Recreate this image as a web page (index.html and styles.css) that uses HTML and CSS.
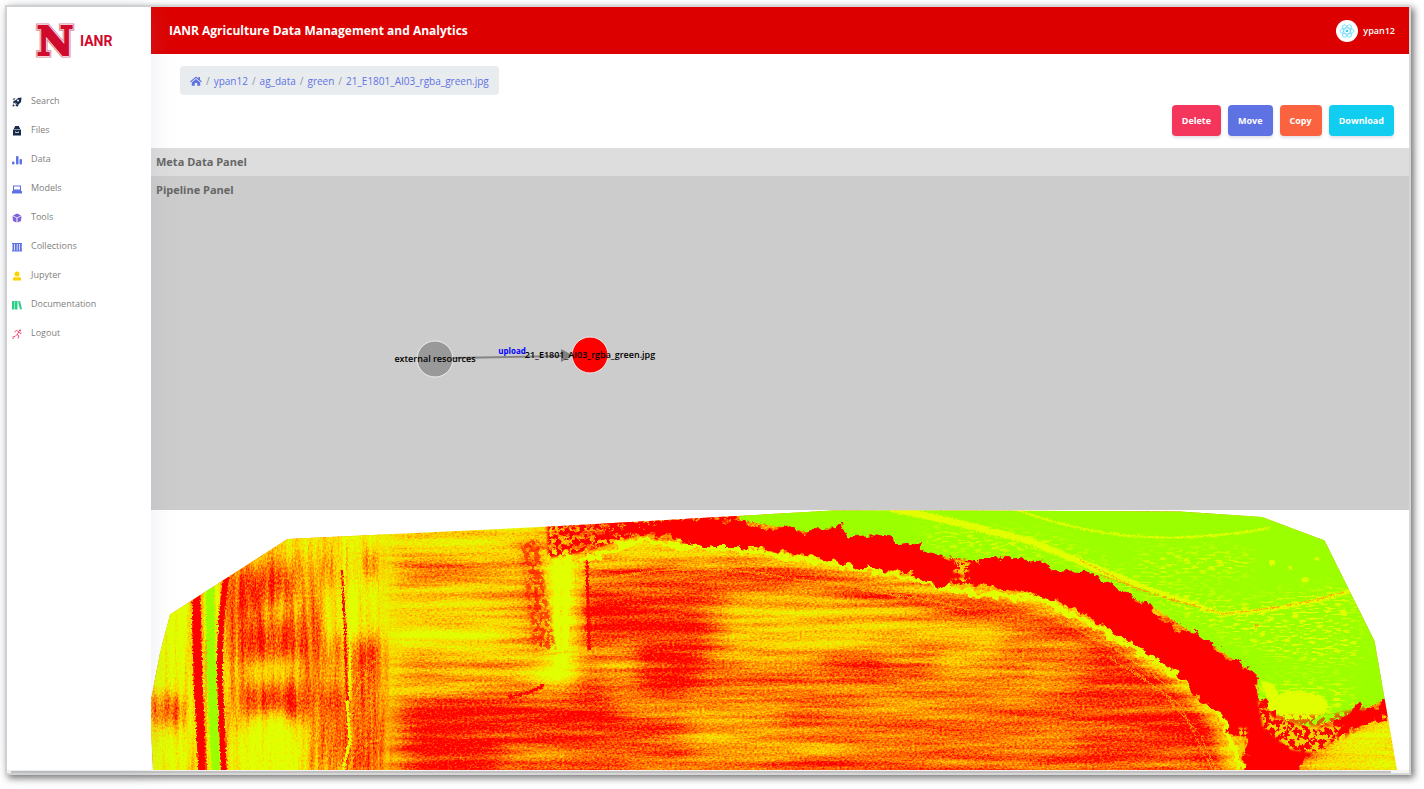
FILE: index.html
```
<!DOCTYPE html>
<html lang="en">
<head>
<meta charset="utf-8">
<title>IANR Agriculture Data Management and Analytics</title>
<meta name="viewport" content="width=device-width, initial-scale=1">
<link rel="stylesheet" href="styles.css">
</head>
<body>
<div class="window">
  <div class="layout">
    <aside class="sidebar">
      <a class="brand" href="#" aria-label="IANR home">
        <svg class="brand-mark" viewBox="0 0 50 60" aria-hidden="true">
          <text class="mark-outer" x="25" y="44" text-anchor="middle">N</text>
          <text class="mark-gap" x="25" y="44" text-anchor="middle">N</text>
          <text class="mark-inner" x="25" y="44" text-anchor="middle">N</text>
        </svg>
        <span class="brand-name">IANR</span>
      </a>
      <nav>
        <ul class="nav">
          <li><a href="#"><svg viewBox="0 0 20 20" class="navy"><path d="M19 1l-1 9-5 5-1 4-5-1 1-3-3-3-3 1 1-5 5-2 4-4z"/><path d="M2 14l4 4-5 1zM1 4l6-2-3 4z"/><circle cx="12" cy="7" r="2" fill="#fff"/><path d="M6 11l4 4" stroke="#fff" stroke-width="1.5"/></svg>Search</a></li>
          <li><a href="#"><svg viewBox="0 0 20 20" class="navy"><path d="M6 0h8v3H6zM4 3h12v3H4zM2 7h16v12H2z"/><path d="M7 11v2h6v-2" fill="none" stroke="#fff" stroke-width="1.5"/></svg>Files</a></li>
          <li><a href="#"><svg viewBox="0 0 20 20" class="indigo"><rect x="0" y="13" width="5" height="6" rx="2"/><rect x="8" y="2" width="5" height="17" rx="2"/><rect x="15" y="8" width="5" height="11" rx="2"/></svg>Data</a></li>
          <li><a href="#"><svg viewBox="0 0 20 20" class="indigo"><path d="M2 3h16v11H2zM0 14h20v5H0z"/><path d="M4 5h12v6H4z" fill="#fff"/></svg>Models</a></li>
          <li><a href="#"><svg viewBox="0 0 20 20" class="purple"><path d="M10 1l8 4-8 4-8-4z"/><path d="M1 6l8 4v9l-7-3zM19 6l-8 4v9l7-3z"/></svg>Tools</a></li>
          <li><a href="#"><svg viewBox="0 0 20 20" class="indigo"><path d="M0 2h20v2H0zM0 17h20v2H0zM1 3h3.500v15H1zM6 3h3.500v15H6zM11 3h3.500v15H11zM16 3h3.500v15H16z"/></svg>Collections</a></li>
          <li><a href="#"><svg viewBox="0 0 20 20" class="yellow"><circle cx="10" cy="6" r="5"/><path d="M2 19v-4q0-3 4-3 4 2 8 0 4 0 4 3v4z"/></svg>Jupyter</a></li>
          <li><a href="#"><svg viewBox="0 0 20 20" class="green"><path d="M0 2h5v17H0zM6 2h5v17H6zM12 3l4-1 4 16-4 1z"/></svg>Documentation</a></li>
          <li><a href="#"><svg viewBox="0 0 20 20" class="red"><circle cx="16" cy="3" r="2"/><path d="M5 6l4-3 5 3-4 5 4 3-2 5M10 11l-4 4-5 1M14 6l2 3 3-1M1 19l3-1" fill="none" stroke="currentColor" stroke-width="1.8"/></svg>Logout</a></li>
        </ul>
      </nav>
    </aside>
    <main class="main">
      <header class="topbar">
        <h1>IANR Agriculture Data Management and Analytics</h1>
        <a class="user" href="#">
          <svg class="avatar" viewBox="0 0 22 22" aria-hidden="true"><circle cx="11" cy="11" r="11" fill="#fff"/><g fill="none" stroke="#61dafb" stroke-width=".8"><ellipse cx="11" cy="11" rx="7" ry="3"/><ellipse cx="11" cy="11" rx="7" ry="3" transform="rotate(60 11 11)"/><ellipse cx="11" cy="11" rx="7" ry="3" transform="rotate(120 11 11)"/></g><circle cx="11" cy="11" r="1.3" fill="#3fc6ee"/></svg>
          ypan12
        </a>
      </header>
      <section class="toolbar">
        <nav aria-label="Breadcrumb">
          <ol class="crumbs">
            <li><a href="#" aria-label="Home"><svg class="home" viewBox="0 0 24 20"><path d="M12 1L0 11l1.500 1.600L12 4l10.500 8.600L24 11l-4-3.400V2h-3v3z"/><path d="M12 6l-8.500 7v6.500h6V14h5v5.500h6V13z"/></svg></a></li>
            <li><a href="#">ypan12</a></li>
            <li><a href="#">ag_data</a></li>
            <li><a href="#">green</a></li>
            <li><a href="#">21_E1801_AI03_rgba_green.jpg</a></li>
          </ol>
        </nav>
        <div class="actions">
          <button class="btn danger" type="button">Delete</button>
          <button class="btn primary" type="button">Move</button>
          <button class="btn warning" type="button">Copy</button>
          <button class="btn info" type="button">Download</button>
        </div>
      </section>
      <section class="panel meta"><h2>Meta Data Panel</h2></section>
      <section class="panel pipeline">
        <h2>Pipeline Panel</h2>
        <svg class="graph" role="img" aria-label="Pipeline graph">
          <path d="M302 154L411 152" stroke="#858585" stroke-width="2"/>
          <path d="M410 145L422 151.500 410 158z" fill="#808080"/>
          <circle cx="284" cy="155" r="18" fill="#999"/>
          <circle cx="439" cy="151" r="18" fill="#f00"/>
          <text x="284" y="158" class="node-label">external resources</text>
          <text x="439" y="154" class="node-label">21_E1801_AI03_rgba_green.jpg</text>
          <text x="361" y="150" class="edge-label">upload</text>
        </svg>
      </section>
      <svg class="aerial" viewBox="151 510 1258 260" role="img" aria-label="21_E1801_AI03_rgba_green.jpg">
        <defs>
          <clipPath id="edge"><path d="M150 705L160 653 170 614.500 287.500 539 560 526 833 510.500 950 510.500 1180 511.500 1262 517 1324.500 540.500 1374.500 641 1397 770H153z"/></clipPath>
          <linearGradient id="fade" gradientUnits="userSpaceOnUse" x1="376" x2="404" y1="0" y2="0"><stop offset="0" stop-color="#fff"/><stop offset="1" stop-color="#000"/></linearGradient>
          <mask id="west" maskUnits="userSpaceOnUse" x="150" y="510" width="300" height="260"><path fill="url(#fade)" d="M150 510H450V770H150z"/></mask>
          <filter id="rows" filterUnits="userSpaceOnUse" x="150" y="510" width="1259" height="260" color-interpolation-filters="sRGB">
            <feGaussianBlur in="SourceGraphic" stdDeviation="9" result="s"/>
            <feTurbulence type="fractalNoise" baseFrequency="0.008 0.13" numOctaves="4" seed="4"/>
            <feColorMatrix values="1 0 0 0 0 1 0 0 0 0 1 0 0 0 0 0 0 0 0 1" result="n1"/>
            <feTurbulence type="fractalNoise" baseFrequency="0.4 0.6" numOctaves="2" seed="9"/>
            <feColorMatrix values="1 0 0 0 0 1 0 0 0 0 1 0 0 0 0 0 0 0 0 1" result="n2"/>
            <feComposite in="s" in2="n1" operator="arithmetic" k2="1" k3="0.64" k4="-0.32" result="a"/>
            <feComposite in="a" in2="n2" operator="arithmetic" k2="1" k3="0.6" k4="-0.3"/>
            <feComponentTransfer><feFuncR type="table" tableValues="1 1 1 .88 .88"/><feFuncG type="table" tableValues="0 .46 .82 1 1"/><feFuncB type="table" tableValues="0 0"/></feComponentTransfer>
          </filter>
          <filter id="cols" filterUnits="userSpaceOnUse" x="150" y="510" width="1259" height="260" color-interpolation-filters="sRGB">
            <feGaussianBlur in="SourceGraphic" stdDeviation="8" result="s"/>
            <feTurbulence type="fractalNoise" baseFrequency="0.2 0.012" numOctaves="3" seed="7"/>
            <feColorMatrix values="1 0 0 0 0 1 0 0 0 0 1 0 0 0 0 0 0 0 0 1" result="n1"/>
            <feTurbulence type="fractalNoise" baseFrequency="0.6 0.4" numOctaves="2" seed="2"/>
            <feColorMatrix values="1 0 0 0 0 1 0 0 0 0 1 0 0 0 0 0 0 0 0 1" result="n2"/>
            <feComposite in="s" in2="n1" operator="arithmetic" k2="1" k3="0.6" k4="-0.3" result="a"/>
            <feComposite in="a" in2="n2" operator="arithmetic" k2="1" k3="0.6" k4="-0.3"/>
            <feComponentTransfer><feFuncR type="table" tableValues="1 1 1 .88 .88"/><feFuncG type="table" tableValues="0 .46 .82 1 1"/><feFuncB type="table" tableValues="0 0"/></feComponentTransfer>
          </filter>
          <filter id="rough" filterUnits="userSpaceOnUse" x="150" y="500" width="1259" height="280">
            <feTurbulence type="fractalNoise" baseFrequency="0.11" numOctaves="4" seed="3"/>
            <feDisplacementMap in="SourceGraphic" scale="14" xChannelSelector="R" yChannelSelector="G"/>
          </filter>
          <filter id="frayed" filterUnits="userSpaceOnUse" x="150" y="500" width="1259" height="280">
            <feTurbulence type="fractalNoise" baseFrequency="0.5" numOctaves="2" seed="5"/>
            <feDisplacementMap in="SourceGraphic" scale="5" xChannelSelector="R" yChannelSelector="G"/>
          </filter>
          <filter id="speckle" filterUnits="userSpaceOnUse" x="150" y="500" width="1259" height="280">
            <feTurbulence type="fractalNoise" baseFrequency="0.12 0.5" numOctaves="3" seed="12"/>
            <feColorMatrix values="0 0 0 0 0  0 0 0 0 0  0 0 0 0 0  12 0 0 0 -6.500" result="m"/>
            <feGaussianBlur in="SourceGraphic" stdDeviation="8"/>
            <feComposite in2="m" operator="in"/>
          </filter>
          <filter id="clumps" filterUnits="userSpaceOnUse" x="150" y="500" width="1259" height="280">
            <feTurbulence type="fractalNoise" baseFrequency="0.2" numOctaves="3" seed="8"/>
            <feColorMatrix values="0 0 0 0 0  0 0 0 0 0  0 0 0 0 0  20 0 0 0 -9.500" result="m"/>
            <feGaussianBlur in="SourceGraphic" stdDeviation="1"/>
            <feComposite in2="m" operator="in"/>
          </filter>
        </defs>
        <g clip-path="url(#edge)">
          <g filter="url(#rows)">
            <path fill="#484848" d="M100 460H1450V820H100z"/>
            <path fill="#7c7c7c" d="M340 500H550V685L500 690 340 695z"/>
            <path fill="#505050" d="M400 565h110v14H400zM420 594h110v10H420zM410 660h110v16H410z"/>
            <path fill="#a8a8a8" d="M380 615h120v38H380zM380 515h150v25H380z"/>
            <path fill="#101010" d="M412 697L500 694 560 690 600 680 620 720 700 740 720 780H412z"/>
            <path fill="#343434" d="M500 740h270v40H500z"/>
            <path fill="#343434" d="M520 540l18 0 18 110h-22z"/>
            <path fill="#ccc" d="M545 550h32v132l-20 8-28-2 20-22z"/>
            <path fill="#080808" d="M584 588L640 595 700 605 710 650 690 690 645 690 630 640 585 635z"/>
            <path fill="#242424" d="M580 560l60-6 60 0 200 30 0 14-180-20-140 4z"/>
            <path fill="#606060" d="M590 645h48v28h-48z"/>
            <path fill="#7c7c7c" d="M725 595L900 605 1000 625 960 645 730 660z"/>
            <path fill="#5e5e5e" d="M690 695L1060 655 1060 690 750 770 690 760z"/>
            <path fill="#181818" d="M825 655h60v22h-60z"/>
            <path fill="#141414" d="M780 722l300-12 0 12-300 10zM760 766h340v17H760zM700 686l330-18 0 9-330 18z"/>
            <path fill="#202020" d="M1100 650L1180 700 1210 770H1100L1070 730 1020 712 1080 690z"/>
            <path fill="#808080" d="M940 622L1010 630 990 665 940 675z"/>
            <path fill="none" stroke="#000" stroke-width="18" d="M720 560L800 573 900 595 1000 604 1080 632 1150 674 1195 714 1218 775"/>
            <path fill="none" stroke="#d0d0d0" stroke-width="11" d="M640 548L760 555 860 573 940 590 1020 594 1070 611 1130 644 1190 686 1222 721 1238 775"/>
            <path fill="#aaa" d="M1290 780L1340 735 1400 712V780z"/>
            <path fill="#bbb" d="M560 565L630 540 690 550 660 555 590 566z"/>
          </g>
          <g mask="url(#west)"><g filter="url(#cols)">
            <path fill="#606060" d="M100 460H450V820H100z"/>
            <path fill="#c0c0c0" d="M130 590h63v190h-63zM203 560h22v220h-22z"/>
            <circle cx="165" cy="710" r="19" fill="#303030"/>
            <path fill="#909090" d="M240 520h100v35H240z"/>
            <path fill="#1c1c1c" d="M225 575l60-8 10 25-30 15-40 20zM228 625l70-8 10 38-78 8zM240 690l90-5 10 25-90 20z"/>
            <ellipse cx="272" cy="755" rx="40" ry="42" fill="#c8c8c8"/>
            <ellipse cx="270" cy="670" rx="28" ry="9" fill="#999"/>
            <path fill="#b8b8b8" d="M325 590h20v45h-20zM345 520h50v110l-30 5h-20z"/>
            <path fill="#383838" d="M363 550h17v30h-17zM308 610h14v160h-14z"/>
            <path fill="#1c1c1c" d="M355 645h27v130h-27zM335 690h12v80h-12z"/>
            <path fill="#b0b0b0" d="M388 510h40v270h-40z"/>
          </g></g>
          <g filter="url(#frayed)" fill="none">
            <path d="M196 595L198 680 203 775" stroke="#f00" stroke-width="9"/>
            <path d="M210 588L211 660 216 775" stroke="#9cff00" stroke-width="9"/>
            <path d="M227 573Q219 620 220 680L224 775" stroke="#f00" stroke-width="6"/>
            <path d="M206 640V775M229 600V660" stroke="#ff7a00" stroke-width="1"/>
            <path d="M347 700L350 740 342 775" stroke="#e1ff00" stroke-width="3"/>
            <path d="M345 535L344 590M350 590L350 700" stroke="#e1ff00" stroke-width="3"/>
            <path d="M342 570L345 630 347 700" stroke="#f00" stroke-width="2"/>
            <path d="M350 700Q350 670 378 660M352 715Q356 680 370 672M349 770Q354 745 382 738M352 680V770M366 670V760M372 670V735" stroke="#ffc800" stroke-width="1"/>
            <path d="M557 560V680M568 555L564 665" stroke="#e1ff00" stroke-width="7"/>
            <path d="M587 560L589 650" stroke="#f00" stroke-width="3"/>
            <path d="M508 697Q530 694 544 685" stroke="#f00" stroke-width="3"/>
            <path d="M520 661Q555 650 584 652M580 560V650M575 570L580 670" stroke="#ffb400" stroke-width="1"/>
          </g>
          <g filter="url(#frayed)">
            <path fill="#9cff00" d="M740 500H1420V700L1385 700 1350 716 1310 727 1282 720 1258 700 1257 675 1150 605 1050 569 950 558 740 520z"/>
            <g fill="none" stroke="#e1ff00">
              <path stroke-width="2" d="M1012 508Q1070 530 1130 536 1200 541 1270 528"/>
              <path stroke-width="7" d="M890 508L950 521 1030 541 1090 566 1140 586"/>
              <path stroke-width="4" d="M1130 582L1222 614Q1290 610 1350 591"/>
            </g>
            <path d="M1080 560L1140 590 1222 614Q1290 608 1345 592M1100 575L1180 603" fill="none" stroke="#ff9a00" stroke-width="1"/>
            <ellipse cx="1298" cy="706" rx="30" ry="15" fill="#e1ff00"/>
            <path fill="#e1ff00" d="M1260 680l14 5 14 30-16-5z"/>
            <circle cx="1272" cy="563" r="3" fill="#e1ff00"/><circle cx="1290" cy="568" r="2" fill="#e1ff00"/><circle cx="1305" cy="580" r="3" fill="#e1ff00"/><circle cx="1317" cy="559" r="2" fill="#e1ff00"/><circle cx="1343" cy="612" r="3" fill="#e1ff00"/><circle cx="1256" cy="626" r="2" fill="#ff9a00"/>
          </g>
          <g filter="url(#speckle)" fill="#e1ff00">
            <path d="M920 528L1050 535 1130 575 1240 600 1350 585 1365 660 1310 668 1230 640 1180 615 1110 580 1060 560 930 548z"/>
            <path d="M1130 550h120v25h-100zM1260 680h90v35h-90zM1270 640h90v20h-90z"/>
          </g>
          <g filter="url(#rough)">
            <path fill="none" stroke="#e1ff00" stroke-width="5" d="M580 560L640 540 680 546 755 551 830 564 910 577 950 590 1045 600 1115 638 1180 676 1222 716 1242 770"/>
            <path fill="#f00" d="M625 525L650 525 700 519 735 520 757 528 775 530 787 525 805 533 820 528 842 527 850 536 890 535 900 545 918 543 930 553 970 561 995 561 1010 556 1045 562 1050 570 1085 571 1115 586 1133 600 1150 604 1160 620 1175 628 1195 634 1215 645 1225 657 1235 658 1257 675 1258 690 1270 712 1282 719 1310 728 1330 726 1350 714 1356 703 1362 712 1392 698 1395 715 1370 722 1340 734 1310 756 1295 775H1243L1247 740 1232 733 1222 713 1195 697 1180 675 1150 655 1115 634 1080 610 1065 605 1045 597 1020 592 985 586 950 584 940 588 920 578 910 571 870 570 830 560 790 553 755 547 715 547 680 543 670 535 635 534 600 528z"/>
          </g>
          <g fill="#f00" filter="url(#clumps)">
            <path d="M547 522L640 515 645 534 580 553 548 558z"/>
            <path d="M520 540h18l18 110h-22zM1250 715l80 0 40-10-10 25-60 30z" opacity=".6"/>
            <path d="M640 516L740 514 735 522 640 528z"/>
          </g>
          <g fill="#f0d000" filter="url(#clumps)">
            <path d="M955 558l18 6-8 12-12-4zM950 580l18-4 6 10-20 2zM1258 700l16 18 30 8 40 0-25 28-30-5-26-22zM1238 728h9v20l-8 10z"/>
          </g>
          <g filter="url(#frayed)" fill="none" stroke="#ffb400" stroke-width="1">
            <path d="M1110 658L1160 690 1200 735 1218 775M1130 668L1180 705 1215 775M860 590L930 600 970 610M1060 620L1120 652 1180 695M620 576Q700 560 800 580 860 582 900 598M590 580L640 574"/>
          </g>
        </g>
      </svg>
    </main>
  </div>
  <div class="scroll-track"><div class="scroll-thumb"></div></div>
</div>
</body>
</html>
```
FILE: styles.css
```
* { box-sizing: border-box; }
body {
  margin: 0;
  padding: 5px 13px 13px 5px;
  background: #fff;
  color: #525f7f;
  font-family: "Open Sans", "Noto Sans", sans-serif;
  font-size: 10px;
}
a { color: inherit; text-decoration: none; }
h1, h2, ul, ol { margin: 0; padding: 0; }
ul, ol { list-style: none; }

.window {
  border: 2px solid #d6d6d6;
  background: #fff;
  box-shadow: 3px 3px 7px rgba(0, 0, 0, .55);
}
.layout { display: flex; align-items: stretch; }

.sidebar {
  position: relative;
  z-index: 1;
  flex: 0 0 144px;
  background: #fff;
  box-shadow: 0 0 24px rgba(136, 152, 170, .18);
}
.brand {
  display: flex;
  align-items: center;
  height: 68px;
  padding-left: 23px;
  color: #d00a2d;
}
.brand-mark {
  width: 50px;
  height: 60px;
  font: bold 40px "DejaVu Serif", serif;
}
.mark-outer { fill: #d88a98; stroke: #d88a98; stroke-width: 5; }
.mark-gap { fill: #fff; stroke: #fff; stroke-width: 3; }
.mark-inner { fill: #d00a2d; stroke: #d00a2d; stroke-width: 2; }
.brand-name { font: 700 14px Roboto, sans-serif; }
.nav { padding-top: 11px; }
.nav a {
  display: flex;
  align-items: center;
  gap: 9px;
  height: 29px;
  padding-left: 5px;
  color: #808080;
  font-size: 9px;
}
.nav svg { width: 10px; height: 10px; margin-top: 2px; fill: currentColor; }
.navy { color: #172b4d; }
.indigo { color: #5e72e4; }
.purple { color: #8060d8; }
.yellow { color: #ffd000; }
.green { color: #2dce89; }
.red { color: #f5365c; }

.main { flex: 1; min-width: 0; }
.topbar {
  display: flex;
  align-items: center;
  justify-content: space-between;
  height: 47px;
  padding: 0 14px 0 18px;
  background: #d00;
  color: #fff;
}
.topbar h1 { font-size: 12px; font-weight: 700; }
.user { display: flex; align-items: center; gap: 5px; font-size: 9px; font-weight: 600; }
.avatar { width: 22px; height: 22px; }

.toolbar { padding: 12px 15px 12px 29px; }
.crumbs {
  display: inline-flex;
  align-items: center;
  height: 29px;
  padding: 0 10px;
  border-radius: 4px;
  background: #e9ecef;
  color: #5e72e4;
  vertical-align: top;
}
.crumbs li + li::before { content: "/"; padding: 0 4px; color: #8898aa; }
.home { display: block; width: 12px; height: 10px; fill: #5e72e4; }
.actions { display: flex; justify-content: flex-end; gap: 7px; padding-top: 10px; }
.btn {
  height: 31px;
  padding: 0 10px;
  border: 0;
  border-radius: 4px;
  color: #fff;
  font: 700 9px "Open Sans", sans-serif;
  box-shadow: 0 2px 3px rgba(50, 50, 93, .15);
}
.danger { background: #f5365c; }
.primary { background: #5e72e4; }
.warning { background: #fb6340; }
.info { background: #11cdef; }

.panel h2 {
  height: 28px;
  padding-left: 5px;
  color: #666;
  font-size: 11px;
  font-weight: 700;
  line-height: 28px;
}
.meta { background: #ddd; }
.pipeline { background: #ccc; }
.graph { display: block; width: 100%; height: 306px; }
.graph circle { stroke: #eee; stroke-width: 1; }
.graph text { text-anchor: middle; }
.node-label { fill: #000; font-size: 9px; font-weight: 600; }
.edge-label { fill: #00f; font-size: 8px; font-weight: 700; }
.aerial { display: block; width: 100%; height: auto; }

.scroll-track { padding: 1px 18px 0 4px; background: #f4f4f4; }
.scroll-thumb { height: 2px; background: #c1c1c1; }
```
